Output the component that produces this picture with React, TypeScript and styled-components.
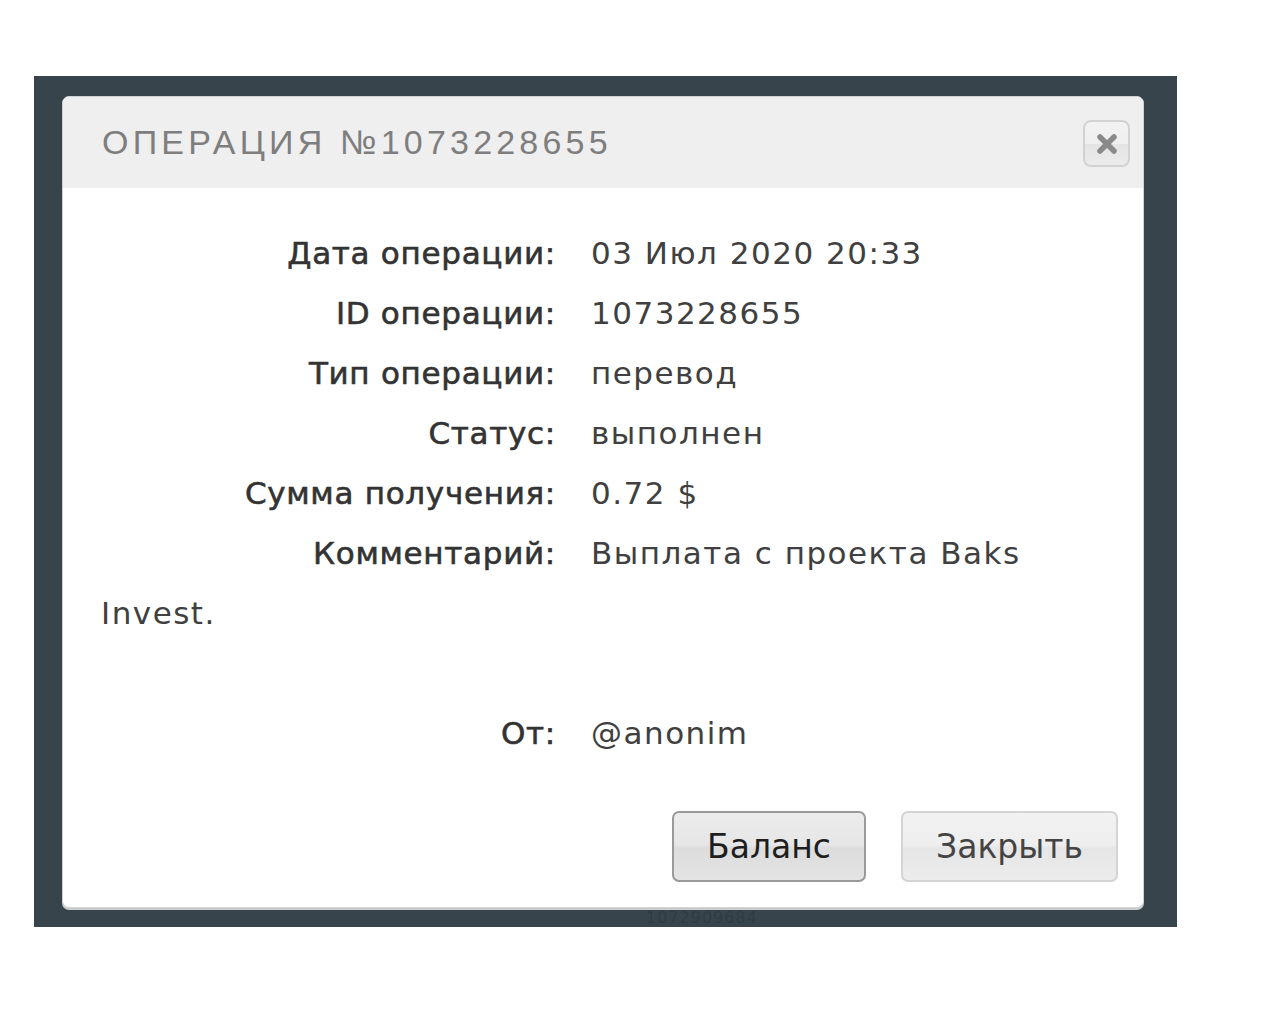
import React from 'react';
import styled, { createGlobalStyle } from 'styled-components';

const GlobalStyle = createGlobalStyle`
  html, body {
    margin: 0;
    padding: 0;
    background: #ffffff;
  }
`;

const Page = styled.div`
  width: 1280px;
  height: 1024px;
  padding: 76px 0 0 34px;
  box-sizing: border-box;
`;

const Backdrop = styled.div`
  position: relative;
  width: 1143px;
  height: 851px;
  background: #37444c;
  padding: 20px 33px 0 28px;
  box-sizing: border-box;
  overflow: hidden;
`;

const GhostText = styled.span`
  position: absolute;
  left: 612px;
  bottom: 1px;
  font-family: 'DejaVu Sans', sans-serif;
  font-size: 16px;
  line-height: 16px;
  color: #2f3c44;
  letter-spacing: 1px;
`;

const Modal = styled.div`
  position: relative;
  z-index: 1;
  width: 1082px;
  height: 812px;
  background: #ffffff;
  border-radius: 7px;
  border: 1px solid #cfd2d4;
  box-shadow: 0 2px 0 #c9cccd;
  box-sizing: border-box;
  display: flex;
  flex-direction: column;
  overflow: hidden;
`;

const Header = styled.div`
  height: 91px;
  background: #efefef;
  display: flex;
  align-items: center;
  justify-content: space-between;
  padding: 0 13px 0 39px;
  flex-shrink: 0;
`;

const Title = styled.h3`
  margin: 0;
  font-family: 'Liberation Sans', sans-serif;
  font-weight: 400;
  font-size: 34px;
  letter-spacing: 4.2px;
  color: #7e7e7e;
`;

const CloseButton = styled.button`
  width: 47px;
  height: 47px;
  border: 2px solid #d2d2d2;
  border-radius: 8px;
  background: linear-gradient(#f2f2f2 0%, #efefef 50%, #e4e4e4 52%, #ececec 100%);
  display: flex;
  align-items: center;
  justify-content: center;
  padding: 0;
  margin-top: 2px;
`;

const Body = styled.div`
  flex: 1;
  padding: 35px 38px 0 38px;
  font-family: 'DejaVu Sans', sans-serif;
  font-size: 31px;
  line-height: 60px;
  letter-spacing: 1.5px;
  color: #404040;
`;

const Line = styled.div<{ $gapAfter?: boolean }>`
  margin-bottom: ${(p) => (p.$gapAfter ? '60px' : '0')};
`;

const Label = styled.span`
  display: inline-block;
  width: 455px;
  margin-right: 35px;
  text-align: right;
  letter-spacing: 0.7px;
  color: #333333;
  -webkit-text-stroke: 0.6px #333333;
`;

const Value = styled.span`
  color: #404040;
`;

const Footer = styled.div`
  display: flex;
  justify-content: flex-end;
  gap: 35px;
  padding: 0 25px 25px 0;
`;

const Button = styled.button<{ $primary?: boolean }>`
  height: 71px;
  padding: 0 33px;
  min-width: ${(p) => (p.$primary ? '194px' : '215px')};
  border-radius: 7px;
  border: 2px solid ${(p) => (p.$primary ? '#9a9a9a' : '#d4d4d4')};
  background: ${(p) =>
    p.$primary
      ? 'linear-gradient(#ececec 0%, #e6e6e6 48%, #dcdcdc 52%, #e4e4e4 100%)'
      : 'linear-gradient(#f2f2f2 0%, #eeeeee 48%, #e6e6e6 52%, #ececec 100%)'};
  font-family: 'DejaVu Sans', sans-serif;
  font-size: 33px;
  color: ${(p) => (p.$primary ? '#1e1e1e' : '#444444')};
  cursor: pointer;
`;

const rows: [string, string][] = [
  ['Дата операции:', '03 Июл 2020 20:33'],
  ['ID операции:', '1073228655'],
  ['Тип операции:', 'перевод'],
  ['Статус:', 'выполнен'],
  ['Сумма получения:', '0.72 $'],
];

export default function App() {
  return (
    <>
      <GlobalStyle />
      <Page>
        <Backdrop>
          <GhostText>1072909684</GhostText>
          <Modal>
            <Header>
              <Title>ОПЕРАЦИЯ №1073228655</Title>
              <CloseButton aria-label='close'>
                <svg width='22' height='22' viewBox='0 0 22 22'>
                  <path
                    d='M4 4 L18 18 M18 4 L4 18'
                    stroke='#8a8a8a'
                    strokeWidth='5.5'
                    strokeLinecap='round'
                  />
                </svg>
              </CloseButton>
            </Header>
            <Body>
              {rows.map(([l, v]) => (
                <Line key={l}>
                  <Label>{l}</Label>
                  <Value>{v}</Value>
                </Line>
              ))}
              <Line $gapAfter>
                <Label>Комментарий:</Label>
                <Value>Выплата с проекта Baks Invest.</Value>
              </Line>
              <Line>
                <Label>От:</Label>
                <Value>@anonim</Value>
              </Line>
            </Body>
            <Footer>
              <Button $primary>Баланс</Button>
              <Button>Закрыть</Button>
            </Footer>
          </Modal>
        </Backdrop>
      </Page>
    </>
  );
}
